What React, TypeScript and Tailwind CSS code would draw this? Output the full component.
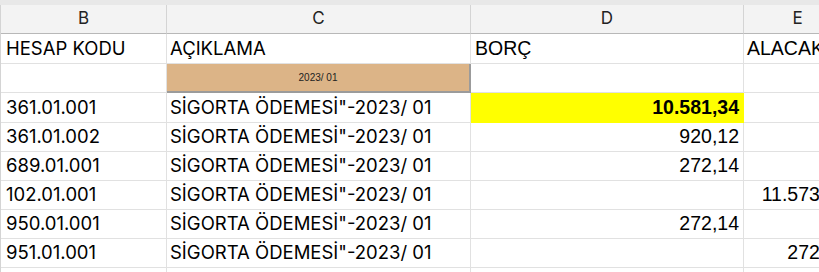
const aptos = "font-['Inter','Open_Sans',sans-serif]"
const arial = "font-['Liberation_Sans',Arial,sans-serif]"

type Row = {
  code: string
  desc: string
  borc?: string
  alacak?: string
  h: string
}

const rows: Row[] = [
  { code: "361.01.001", desc: "SİGORTA ÖDEMESİ\"-2023/ 01", borc: "10.581,34", h: "h-[30px]" },
  { code: "361.01.002", desc: "SİGORTA ÖDEMESİ\"-2023/ 01", borc: "920,12", h: "h-[29px]" },
  { code: "689.01.001", desc: "SİGORTA ÖDEMESİ\"-2023/ 01", borc: "272,14", h: "h-[29px]" },
  { code: "102.01.001", desc: "SİGORTA ÖDEMESİ\"-2023/ 01", alacak: "11.573,46", h: "h-[29px]" },
  { code: "950.01.001", desc: "SİGORTA ÖDEMESİ\"-2023/ 01", borc: "272,14", h: "h-[29px]" },
  { code: "951.01.001", desc: "SİGORTA ÖDEMESİ\"-2023/ 01", alacak: "272,14", h: "h-[29px]" },
]

const cell = "border-r border-b border-[#e1e1e1] flex items-center overflow-hidden whitespace-nowrap"

function ColHead({ label }: { label: string }) {
  return (
    <div className={`h-[29px] flex items-center justify-center border-r border-b border-r-[#d4d4d4] border-b-[#b8b8b8] bg-[#f3f3f3] text-[17px] text-[#222] ${aptos}`}>
      {label}
    </div>
  )
}

export default function App() {
  return (
    <div className="w-[819px] h-[272px] overflow-hidden bg-white text-black">
      <div className="h-[5px] bg-[#e8e8e8]" />
      <div className="grid grid-cols-[166px_304px_273px_108px] border-l border-[#d4d4d4] w-max">
        <ColHead label="B" />
        <ColHead label="C" />
        <ColHead label="D" />
        <ColHead label="E" />

        {/* titles */}
        <div className={`${cell} h-[30px] pl-[5px] text-[18.5px] ${aptos}`}>HESAP KODU</div>
        <div className={`${cell} h-[30px] pl-[3px] text-[18.5px] ${aptos}`}>AÇIKLAMA</div>
        <div className={`${cell} h-[30px] pl-[4px] text-[19.5px] ${arial}`}>BORÇ</div>
        <div className={`${cell} h-[30px] pl-[3px] text-[19.5px] ${arial}`}>ALACAK</div>

        {/* period row */}
        <div className={`${cell} h-[29px]`} />
        <div className={`h-[29px] flex items-center justify-center bg-[#dcb487] border-r-2 border-b-2 border-[#9b9b9b] text-[10px] text-[#222] ${arial}`}>
          2023/ 01
        </div>
        <div className={`${cell} h-[29px]`} />
        <div className={`${cell} h-[29px]`} />

        {rows.map((r, i) => (
          <div key={r.code} className="contents">
            <div className={`${cell} ${r.h} pl-[5px] text-[18.5px] ${aptos}`}>{r.code}</div>
            <div className={`${cell} ${r.h} pl-[3px] text-[18.5px] ${aptos}`}>{r.desc}</div>
            <div
              className={`${cell} ${r.h} justify-end pr-[4px] text-[19.5px] ${arial} ${
                i === 0 ? "bg-[#ffff00] font-bold border-[#ffff00]" : ""
              }`}
            >
              {r.borc}
            </div>
            <div className={`${cell} ${r.h} justify-end pr-[4px] text-[19.5px] ${arial}`}>{r.alacak}</div>
          </div>
        ))}

        <div className={`${cell} h-[29px]`} />
        <div className={`${cell} h-[29px]`} />
        <div className={`${cell} h-[29px]`} />
        <div className={`${cell} h-[29px]`} />
      </div>
    </div>
  )
}
